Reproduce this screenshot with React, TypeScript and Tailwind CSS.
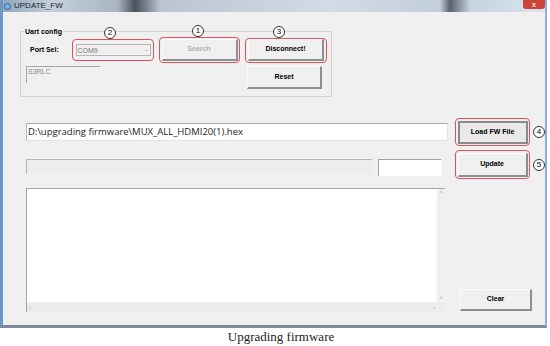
import React from 'react';

const RedBox = ({ className, children }: { className: string; children: React.ReactNode }) => (
  <div className={`relative flex items-center justify-center rounded-[4px] border-[1.5px] border-[#e0535d] ${className}`}>
    {children}
  </div>
);

const Mark = ({ n, className }: { n: number; className: string }) => (
  <span
    className={`absolute flex h-[12px] w-[12px] items-center justify-center rounded-full border border-[#333] bg-white text-[8px] leading-none text-black ${className}`}
  >
    {n}
  </span>
);

const Btn = ({ label, className, muted }: { label: string; className: string; muted?: boolean }) => (
  <div
    className={`flex items-center justify-center border-t border-l border-t-[#fcfcfc] border-l-[#fcfcfc] border-r-2 border-b-2 border-r-[#8f8f8f] border-b-[#8f8f8f] bg-[#f0f0f0] text-[7px] ${
      muted ? 'font-semibold text-[#b0b0b0]' : 'font-bold text-black'
    } ${className}`}
  >
    {label}
  </div>
);

const App = () => {
  return (
    <div className="h-[346px] w-[550px] overflow-hidden bg-white font-['Liberation_Sans',Arial,sans-serif]">
      {/* Window */}
      <div className="flex h-[328px] w-[547px] flex-col border-l-[3px] border-r-[2px] border-b-[3px] border-l-[#6a97c6] border-r-[#8fb0d2] border-b-[#7d8a98]">
        {/* Title bar: blurred glass strip + caption over it */}
        <div className="relative h-[12px] shrink-0">
          <div className="flex h-full w-full">
            <div className="h-full w-[50px] bg-linear-to-r from-[#93a8bd] to-[#c4d0dc]" />
            <div className="h-full w-[65px] bg-linear-to-r from-[#c4d0dc] to-[#a9b5c2]" />
            <div className="h-full w-[17px] bg-linear-to-r from-[#a9b5c2] to-[#4a535e]" />
            <div className="h-full w-[25px] bg-linear-to-r from-[#4a535e] to-[#b9c5d1]" />
            <div className="h-full w-[170px] bg-linear-to-r from-[#b9c5d1] to-[#d2dce6]" />
            <div className="h-full w-[110px] bg-linear-to-r from-[#d2dce6] to-[#c2cedb]" />
            <div className="h-full w-[10px] bg-linear-to-r from-[#c2cedb] to-[#59636f]" />
            <div className="h-full w-[20px] bg-linear-to-r from-[#59636f] to-[#c6d3e0]" />
            <div className="h-full flex-1 bg-linear-to-r from-[#c6d3e0] to-[#d9e4ee]" />
          </div>
          <div className="absolute inset-0 flex items-center pl-[1px]">
            <span className="h-[7px] w-[7px] rounded-full border border-[#2d5f9c] bg-[#7fb2e6]" />
            <span className="ml-[3px] text-[8px] leading-none text-[#222]">UPDATE_FW</span>
            <div className="ml-auto flex h-[9px] w-[22px] items-center justify-center self-start rounded-b-[3px] bg-[#c9453a] text-[7px] font-bold leading-none text-[#f6e6e4]">
              x
            </div>
          </div>
        </div>

        {/* Client area */}
        <div className="flex flex-1 flex-col bg-[#f0f0f0]">
          <fieldset className="ml-[17px] mt-[15px] h-[70px] w-[312px] rounded-[2px] border border-[#d0d0d0] px-0">
            <legend className="ml-[3px] px-[1px] text-[7px] font-bold leading-[9px] text-black">Uart config</legend>
            <div className="mt-[1px] flex h-[26px] items-center">
              <span className="ml-[9px] w-[42px] text-[7px] font-bold text-black">Port Sel:</span>
              <RedBox className="h-[22px] w-[82px]">
                <Mark n={2} className="left-[31px] top-[-13px]" />
                <div className="flex h-[12px] w-[75px] items-center justify-between border border-[#b5b5b5] bg-[#f0f0f0] pl-[1px] pr-[1px] text-[7px] leading-none text-[#777]">
                  <span>COM9</span>
                  <span className="mb-[2px] text-[6px] text-[#999]">⌄</span>
                </div>
              </RedBox>
              <RedBox className="ml-[5px] h-[26px] w-[81px]">
                <Mark n={1} className="left-[32px] top-[-13px]" />
                <Btn label="Search" muted className="h-[22px] w-[76px]" />
              </RedBox>
              <RedBox className="ml-[5px] h-[25px] w-[82px]">
                <Mark n={3} className="left-[27px] top-[-13px]" />
                <Btn label="Disconnect!" className="h-[22px] w-[76px]" />
              </RedBox>
            </div>
            <div className="mt-[2px] flex items-start">
              <div className="ml-[5px] mt-[1px] h-[17px] w-[74px] border-t border-l border-[#a7a7a7] pl-[1px] text-[7px] leading-[9px] text-[#8a8a8a]">
                S3RLC
              </div>
              <Btn label="Reset" className="ml-[147px] mt-[1px] h-[23px] w-[75px]" />
            </div>
          </fieldset>

          <div className="mt-[21px] flex h-[28px] items-center">
            <div className="ml-[23px] flex h-[18px] w-[422px] items-center border border-t-[#a9a9a9] border-l-[#b8b8b8] border-r-[#e3e3e3] border-b-[#e3e3e3] bg-white pl-[1px] font-['Open_Sans',sans-serif] text-[9.5px] text-[#222]">
              D:\upgrading firmware\MUX_ALL_HDMI20(1).hex
            </div>
            <RedBox className="relative ml-[7px] h-[28px] w-[75px]">
              <div className="flex h-[23px] w-[70px] items-center justify-center border-2 border-[#8a8a8a] bg-[#e9e9e9] text-[7px] font-bold text-black">
                Load FW File
              </div>
              <Mark n={4} className="left-[77px] top-[7px]" />
            </RedBox>
          </div>

          <div className="mt-[4px] flex h-[29px] items-start">
            <div className="ml-[23px] mt-[9px] h-[15px] w-[346px] border-t border-l border-[#b5b5b5] bg-[#ededed]" />
            <div className="ml-[6px] mt-[9px] h-[17px] w-[63px] border-t border-l border-[#9f9f9f] bg-white" />
            <RedBox className="relative ml-[14px] h-[29px] w-[75px]">
              <Btn label="Update" className="h-[24px] w-[70px]" />
              <Mark n={5} className="left-[77px] top-[8px]" />
            </RedBox>
          </div>

          <div className="mt-[9px] flex items-end">
            <div className="ml-[23px] flex h-[124px] w-[419px] flex-col border-t border-l border-[#a5a5a5]">
              <div className="flex flex-1">
                <div className="flex-1 bg-white" />
                <div className="flex w-[8px] flex-col items-center justify-between bg-[#f0f0f0] py-[1px] text-[5px] leading-none text-[#999]">
                  <span>˄</span>
                  <span>˅</span>
                </div>
              </div>
              <div className="flex h-[10px] items-center justify-between bg-[#ececec] pl-[2px] pr-[10px] text-[5px] leading-none text-[#999]">
                <span>‹</span>
                <span>›</span>
              </div>
            </div>
            <Btn label="Clear" className="mb-[1px] ml-[15px] h-[22px] w-[72px]" />
          </div>
        </div>
      </div>

      <div className="flex h-[18px] items-center justify-center pl-[12px] font-['Liberation_Serif',serif] text-[13px] text-[#222]">
        Upgrading firmware
      </div>
    </div>
  );
};

export default App;
